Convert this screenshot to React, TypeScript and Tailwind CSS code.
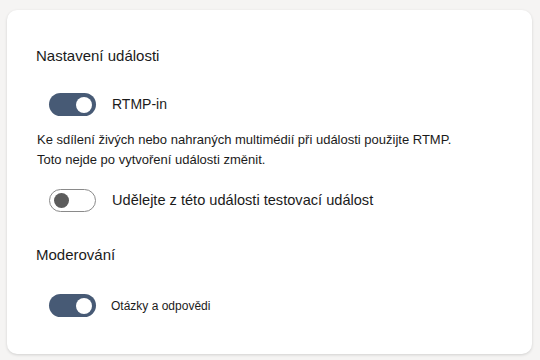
import React from "react";

function Toggle({ on }: { on: boolean }) {
  return on ? (
    <div className="flex h-[23px] w-[47px] shrink-0 items-center justify-end rounded-full bg-[#475a75] pr-[4px]">
      <div className="h-[16px] w-[16px] rounded-full bg-white" />
    </div>
  ) : (
    <div className="flex h-[23px] w-[47px] shrink-0 items-center rounded-full border border-[#8a8a8a] bg-white pl-[4px]">
      <div className="h-[15px] w-[15px] rounded-full bg-[#5c5c5c]" />
    </div>
  );
}

export default function App() {
  return (
    <div
      className="h-[360px] w-[540px] bg-[#f5f4f3] pl-[7px] pr-[8px] pt-[10px]"
      style={{ fontFamily: '"Liberation Sans", Arial, sans-serif' }}
    >
      <div className="flex h-[344px] flex-col rounded-[10px] bg-white pl-[29px] pt-[36px] text-[#1b1b1b] shadow-[0_1px_3px_rgba(0,0,0,0.15)]">
        <p className="text-[15px] leading-[20px]">Nastavení události</p>

        <div className="mt-[27px] flex items-center gap-[16px] pl-[13px]">
          <Toggle on />
          <span className="text-[14px]">RTMP-in</span>
        </div>

        <div className="mt-[14px] pl-[1px] text-[13px] leading-[20px]">
          <p>Ke sdílení živých nebo nahraných multimédií při události použijte RTMP.</p>
          <p>Toto nejde po vytvoření události změnit.</p>
        </div>

        <div className="mt-[19px] flex items-center gap-[16px] pl-[13px]">
          <Toggle on={false} />
          <span className="text-[14.6px]">Udělejte z této události testovací událost</span>
        </div>

        <p className="mt-[33px] text-[15px] leading-[20px]">Moderování</p>

        <div className="mt-[29px] flex items-center gap-[15px] pl-[13px]">
          <Toggle on />
          <span className="text-[12px]">Otázky a odpovědi</span>
        </div>
      </div>
    </div>
  );
}
